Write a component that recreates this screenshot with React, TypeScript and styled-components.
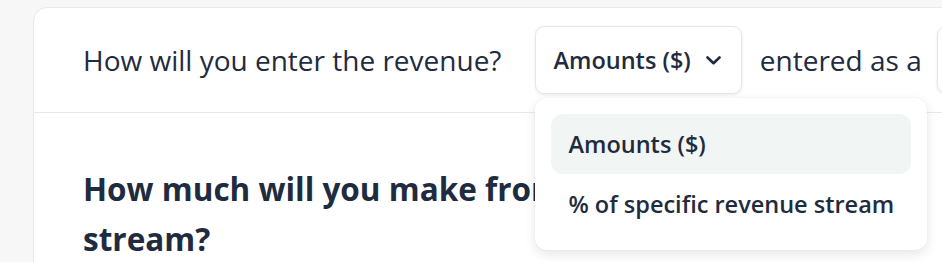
import React from "react";
import styled, { createGlobalStyle } from "styled-components";

const GlobalStyle = createGlobalStyle`
  html, body { margin: 0; padding: 0; }
  body {
    background: #f7f7f7;
    font-family: "Open Sans", "Noto Sans", sans-serif;
    color: #1f2b3e;
    -webkit-font-smoothing: antialiased;
  }
`;

const Page = styled.div`
  width: 942px;
  height: 262px;
  overflow: hidden;
  padding: 7px 0 0 33px;
  box-sizing: border-box;
`;

const Card = styled.div`
  width: 1000px;
  height: 400px;
  background: #ffffff;
  border: 1.5px solid #e8e8e8;
  border-radius: 14px;
  box-sizing: border-box;
`;

const QuestionRow = styled.div`
  display: flex;
  align-items: center;
  height: 105px;
  padding-left: 49px;
  border-bottom: 1.5px solid #e8e8e8;
  box-sizing: border-box;
`;

const Label = styled.span<{ $gap?: number }>`
  font-size: 28px;
  font-weight: 400;
  color: #1f2b3e;
  white-space: nowrap;
  margin-right: ${(p) => p.$gap ?? 0}px;
`;

const SelectWrap = styled.div`
  position: relative;
  margin-right: 18px;
`;

const SelectButton = styled.button`
  display: flex;
  align-items: center;
  gap: 15px;
  height: 68px;
  padding: 0 20px 0 17px;
  background: #ffffff;
  border: 1.5px solid #e6e6e6;
  border-radius: 9px;
  box-shadow: 0 1px 3px rgba(0, 0, 0, 0.08);
  font-family: inherit;
  font-size: 23.5px;
  font-weight: 600;
  color: #1f2b3e;
  cursor: pointer;
  box-sizing: border-box;
  white-space: nowrap;
`;

const NextButton = styled(SelectButton)`
  margin-left: 15px;
  width: 120px;
`;

const Menu = styled.div`
  position: absolute;
  top: 72px;
  left: 0;
  width: 392px;
  padding: 16px 16px 16px;
  background: #ffffff;
  border-radius: 12px;
  box-shadow: 0 4px 12px rgba(0, 0, 0, 0.1), 0 0 2px rgba(0, 0, 0, 0.06);
  box-sizing: border-box;
  z-index: 10;
`;

const MenuItem = styled.div<{ $active?: boolean }>`
  display: flex;
  align-items: center;
  height: 60px;
  padding: 0 17px;
  border-radius: 12px;
  background: ${(p) => (p.$active ? "#f1f6f5" : "transparent")};
  font-size: 23.5px;
  font-weight: 600;
  color: #1f2b3e;
  white-space: nowrap;
`;

const Body = styled.div`
  padding: 51px 49px 0;
`;

const Headline = styled.h2`
  margin: 0;
  max-width: 760px;
  font-size: 31.5px;
  font-weight: 700;
  line-height: 50px;
  color: #1f2b3e;
`;

const Chevron = () => (
  <svg width="15" height="9" viewBox="0 0 15 9" fill="none">
    <path
      d="M1.5 1.5L7.5 7.2L13.5 1.5"
      stroke="#1f2b3e"
      strokeWidth="2.6"
      strokeLinecap="round"
      strokeLinejoin="round"
    />
  </svg>
);

export default function App() {
  return (
    <>
      <GlobalStyle />
      <Page>
        <Card>
          <QuestionRow>
            <Label $gap={34}>How will you enter the revenue?</Label>
            <SelectWrap>
              <SelectButton>
                Amounts ($)
                <Chevron />
              </SelectButton>
              <Menu>
                <MenuItem $active>Amounts ($)</MenuItem>
                <MenuItem>% of specific revenue stream</MenuItem>
              </Menu>
            </SelectWrap>
            <Label>entered as a</Label>
            <NextButton>Dollar</NextButton>
          </QuestionRow>
          <Body>
            <Headline>How much will you make from this revenue stream?</Headline>
          </Body>
        </Card>
      </Page>
    </>
  );
}
